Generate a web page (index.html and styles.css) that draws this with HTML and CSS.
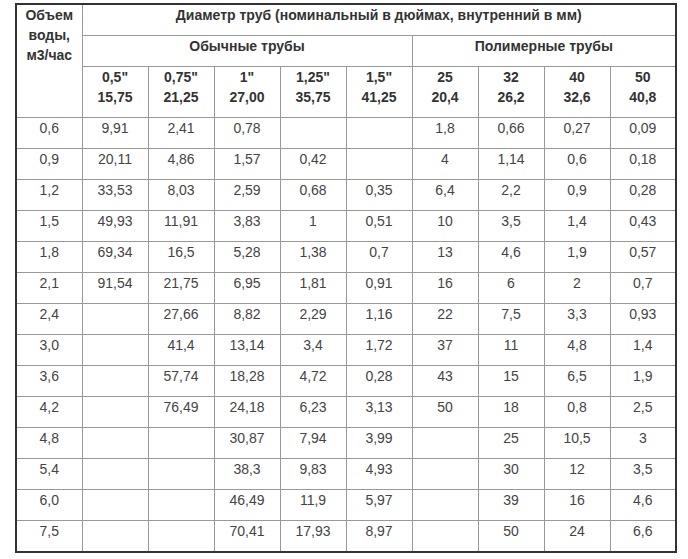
FILE: index.html
```html
<!DOCTYPE html>
<html lang="ru">
<head>
<meta charset="utf-8">
<title>Диаметр труб</title>
<link rel="stylesheet" href="styles.css">
</head>
<body>
<table class="pipes">
  <colgroup>
    <col class="c"><col class="c"><col class="c"><col class="c"><col class="c">
    <col class="c"><col class="c"><col class="c"><col class="c"><col class="c">
  </colgroup>
  <thead>
    <tr class="h1">
      <th rowspan="3">Объем воды, м3/час</th>
      <th colspan="9">Диаметр труб (номинальный в дюймах, внутренний в мм)</th>
    </tr>
    <tr class="h2">
      <th colspan="5">Обычные трубы</th>
      <th colspan="4">Полимерные трубы</th>
    </tr>
    <tr class="h3">
      <th>0,5"<br>15,75</th>
      <th>0,75"<br>21,25</th>
      <th>1"<br>27,00</th>
      <th>1,25"<br>35,75</th>
      <th>1,5"<br>41,25</th>
      <th>25<br>20,4</th>
      <th>32<br>26,2</th>
      <th>40<br>32,6</th>
      <th>50<br>40,8</th>
    </tr>
  </thead>
  <tbody>
    <tr><td>0,6</td><td>9,91</td><td>2,41</td><td>0,78</td><td></td><td></td><td>1,8</td><td>0,66</td><td>0,27</td><td>0,09</td></tr>
    <tr><td>0,9</td><td>20,11</td><td>4,86</td><td>1,57</td><td>0,42</td><td></td><td>4</td><td>1,14</td><td>0,6</td><td>0,18</td></tr>
    <tr><td>1,2</td><td>33,53</td><td>8,03</td><td>2,59</td><td>0,68</td><td>0,35</td><td>6,4</td><td>2,2</td><td>0,9</td><td>0,28</td></tr>
    <tr><td>1,5</td><td>49,93</td><td>11,91</td><td>3,83</td><td>1</td><td>0,51</td><td>10</td><td>3,5</td><td>1,4</td><td>0,43</td></tr>
    <tr><td>1,8</td><td>69,34</td><td>16,5</td><td>5,28</td><td>1,38</td><td>0,7</td><td>13</td><td>4,6</td><td>1,9</td><td>0,57</td></tr>
    <tr><td>2,1</td><td>91,54</td><td>21,75</td><td>6,95</td><td>1,81</td><td>0,91</td><td>16</td><td>6</td><td>2</td><td>0,7</td></tr>
    <tr><td>2,4</td><td></td><td>27,66</td><td>8,82</td><td>2,29</td><td>1,16</td><td>22</td><td>7,5</td><td>3,3</td><td>0,93</td></tr>
    <tr><td>3,0</td><td></td><td>41,4</td><td>13,14</td><td>3,4</td><td>1,72</td><td>37</td><td>11</td><td>4,8</td><td>1,4</td></tr>
    <tr><td>3,6</td><td></td><td>57,74</td><td>18,28</td><td>4,72</td><td>0,28</td><td>43</td><td>15</td><td>6,5</td><td>1,9</td></tr>
    <tr><td>4,2</td><td></td><td>76,49</td><td>24,18</td><td>6,23</td><td>3,13</td><td>50</td><td>18</td><td>0,8</td><td>2,5</td></tr>
    <tr><td>4,8</td><td></td><td></td><td>30,87</td><td>7,94</td><td>3,99</td><td></td><td>25</td><td>10,5</td><td>3</td></tr>
    <tr><td>5,4</td><td></td><td></td><td>38,3</td><td>9,83</td><td>4,93</td><td></td><td>30</td><td>12</td><td>3,5</td></tr>
    <tr><td>6,0</td><td></td><td></td><td>46,49</td><td>11,9</td><td>5,97</td><td></td><td>39</td><td>16</td><td>4,6</td></tr>
    <tr><td>7,5</td><td></td><td></td><td>70,41</td><td>17,93</td><td>8,97</td><td></td><td>50</td><td>24</td><td>6,6</td></tr>
  </tbody>
</table>
</body>
</html>
```

FILE: styles.css
```css
html, body {
  margin: 0;
  padding: 0;
  background: #ffffff;
}

body {
  padding: 3px 0 0 15px;
  font-family: "Liberation Sans", Arial, sans-serif;
  font-size: 14px;
  color: #333333;
}

.pipes {
  border-collapse: collapse;
  table-layout: fixed;
  width: 662px;
  border: 2px solid #333333;
}

.pipes .c {
  width: 66px;
}

.pipes th,
.pipes td {
  border: 1px solid #999999;
  padding: 0 4px 10px;
  line-height: 20px;
  height: 20px;
  text-align: center;
  vertical-align: top;
  overflow: hidden;
}

.pipes th {
  font-weight: bold;
  color: #333333;
}

.pipes td {
  font-weight: normal;
  color: #444444;
}
```
